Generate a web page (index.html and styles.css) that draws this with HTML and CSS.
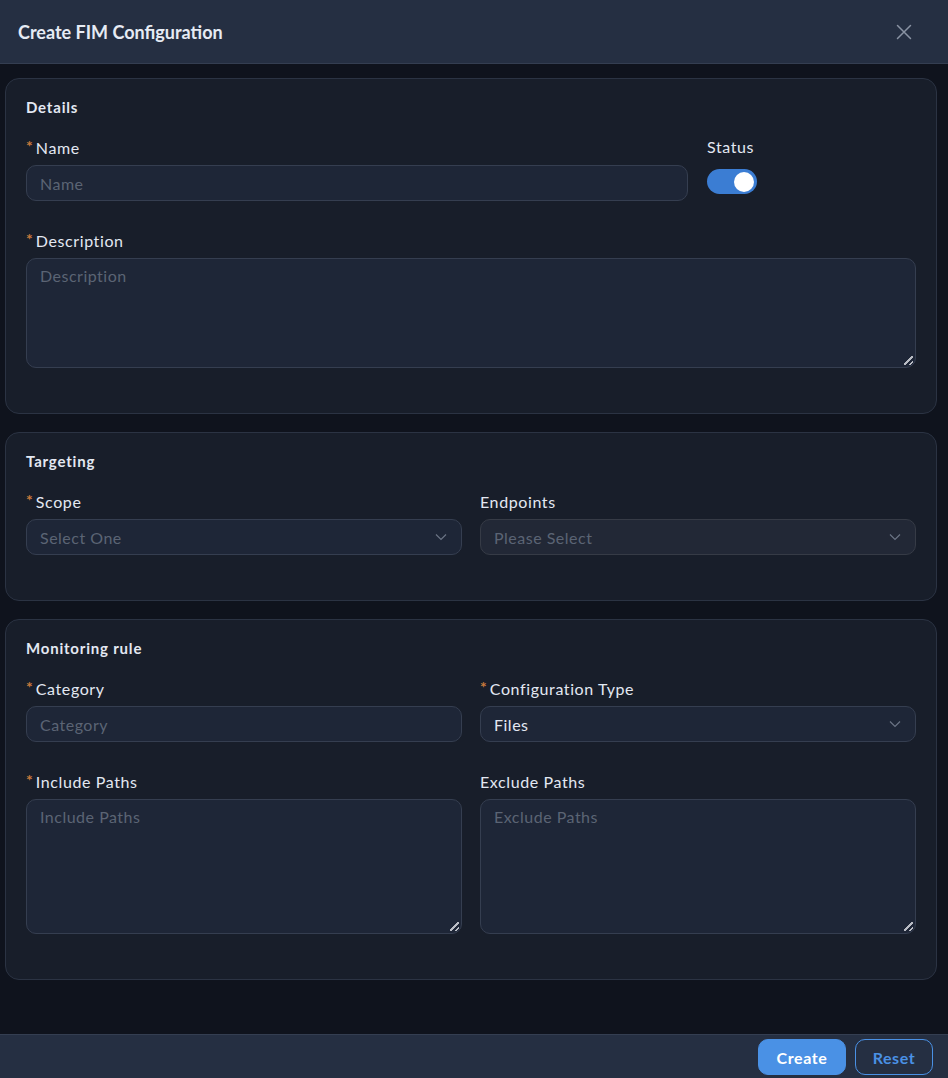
FILE: index.html
```html
<!DOCTYPE html>
<html>
<head>
<meta charset="utf-8">
<link rel="stylesheet" href="styles.css">
</head>
<body>
<div class="modal">
  <header class="modal-header">
    <h1 class="modal-title">Create FIM Configuration</h1>
    <button class="close-btn" aria-label="Close">
      <svg width="16" height="16" viewBox="0 0 16 16"><path d="M1.5 1.5 L14.5 14.5 M14.5 1.5 L1.5 14.5" stroke="#8a93a3" stroke-width="1.5" fill="none" stroke-linecap="round"/></svg>
    </button>
  </header>

  <main class="modal-body">
    <section class="card">
      <h2 class="card-title">Details</h2>
      <div class="row-name">
        <div class="field field-grow">
          <label class="label"><span class="req">*</span>Name</label>
          <div class="input"><span class="ph">Name</span></div>
        </div>
        <div class="field field-status">
          <label class="label">Status</label>
          <div class="toggle"><span class="knob"></span></div>
        </div>
      </div>
      <div class="field">
        <label class="label"><span class="req">*</span>Description</label>
        <div class="textarea ta-desc"><span class="ph">Description</span><span class="grip"></span></div>
      </div>
    </section>

    <section class="card">
      <h2 class="card-title">Targeting</h2>
      <div class="grid2">
        <div class="field">
          <label class="label"><span class="req">*</span>Scope</label>
          <div class="input select"><span class="ph">Select One</span>
            <svg class="chev" width="12" height="8" viewBox="0 0 12 8"><path d="M1 1.5 L6 6.5 L11 1.5" stroke="#6b7485" stroke-width="1.2" fill="none"/></svg>
          </div>
        </div>
        <div class="field">
          <label class="label">Endpoints</label>
          <div class="input select disabled"><span class="ph">Please Select</span>
            <svg class="chev" width="12" height="8" viewBox="0 0 12 8"><path d="M1 1.5 L6 6.5 L11 1.5" stroke="#6b7485" stroke-width="1.2" fill="none"/></svg>
          </div>
        </div>
      </div>
    </section>

    <section class="card">
      <h2 class="card-title">Monitoring rule</h2>
      <div class="grid2">
        <div class="field">
          <label class="label"><span class="req">*</span>Category</label>
          <div class="input"><span class="ph">Category</span></div>
        </div>
        <div class="field">
          <label class="label"><span class="req">*</span>Configuration Type</label>
          <div class="input select"><span class="val">Files</span>
            <svg class="chev" width="12" height="8" viewBox="0 0 12 8"><path d="M1 1.5 L6 6.5 L11 1.5" stroke="#6b7485" stroke-width="1.2" fill="none"/></svg>
          </div>
        </div>
        <div class="field">
          <label class="label"><span class="req">*</span>Include Paths</label>
          <div class="textarea ta-paths"><span class="ph">Include Paths</span><span class="grip"></span></div>
        </div>
        <div class="field">
          <label class="label">Exclude Paths</label>
          <div class="textarea ta-paths"><span class="ph">Exclude Paths</span><span class="grip"></span></div>
        </div>
      </div>
    </section>
  </main>

  <footer class="modal-footer">
    <button class="btn btn-primary">Create</button>
    <button class="btn btn-outline">Reset</button>
  </footer>
</div>
</body>
</html>
```

FILE: styles.css
```css
* { box-sizing: border-box; }
html, body { margin: 0; padding: 0; }
body {
  background: #0f131d;
  font-family: Lato, "Noto Sans", sans-serif;
  color: #e3e8f2;
  width: 948px;
  height: 1078px;
  overflow: hidden;
}
.modal {
  display: flex;
  flex-direction: column;
  height: 1078px;
}
.modal-header {
  height: 64px;
  flex: none;
  background: #252f42;
  border-bottom: 1px solid #343e51;
  display: flex;
  align-items: center;
  justify-content: space-between;
  padding: 0 36px 0 18px;
}
.modal-title {
  margin: 0;
  font-size: 18px;
  font-weight: 700;
  color: #e6ebf4;
  letter-spacing: 0;
}
.close-btn {
  background: none;
  border: 0;
  padding: 0;
  display: flex;
  cursor: pointer;
}
.modal-body {
  flex: 1;
  padding: 14px 11px 0 5px;
  display: flex;
  flex-direction: column;
  gap: 18px;
}
.card {
  background: #181e2a;
  border: 1px solid #2b3343;
  border-radius: 14px;
  padding: 19px 20px 45px 20px;
}
.card-title {
  margin: 0 0 21px 0;
  font-size: 15px;
  font-weight: 700;
  color: #e3e8f2;
  line-height: 18px;
  letter-spacing: 0.8px;
}
.row-name {
  display: flex;
  gap: 19px;
}
.field-grow { flex: 1; }
.field-status { width: 209px; }
.field { margin-bottom: 29px; }
.card > .field:last-child { margin-bottom: 0; }
.grid2 {
  display: grid;
  grid-template-columns: 1fr 1fr;
  column-gap: 18px;
  row-gap: 29px;
}
.grid2 .field { margin-bottom: 0; }
.label {
  display: block;
  font-size: 16px;
  line-height: 21px;
  height: 21px;
  color: #e3e8f2;
  margin-bottom: 7px;
  white-space: nowrap;
  letter-spacing: 0.6px;
}
.field-status .label { margin-bottom: 12px; margin-top: -1px; }
.req {
  color: #c97a3c;
  font-size: 16px;
  font-weight: 700;
  line-height: 1;
  margin-right: 3px;
  position: relative;
  top: -2px;
  letter-spacing: 0;
}
.input {
  height: 36px;
  background: #1e2637;
  border: 1px solid #353e50;
  border-radius: 10px;
  padding: 0 13px;
  display: flex;
  align-items: center;
  font-size: 16px;
  letter-spacing: 0.5px;
}
.ph { color: #5b6474; }
.val { color: #e3e8f2; }
.select { justify-content: space-between; }
.select .chev { margin-right: 1px; }
.disabled { background: #222836; border-color: #363b46; }
.textarea {
  position: relative;
  background: #1e2637;
  border: 1px solid #353e50;
  border-radius: 10px;
  padding: 8px 13px;
  font-size: 16px;
  line-height: 18px;
  letter-spacing: 0.5px;
}
.ta-desc { height: 110px; }
.ta-paths { height: 135px; }
.grip {
  position: absolute;
  right: 2px;
  bottom: 2px;
  width: 9px;
  height: 9px;
  background:
    linear-gradient(135deg, transparent 0 44%, #b9bcc4 44% 56%, transparent 56%),
    linear-gradient(135deg, transparent 0 74%, #b9bcc4 74% 86%, transparent 86%);
}
.toggle {
  width: 50px;
  height: 25px;
  border-radius: 13px;
  background: #3b7dd3;
  position: relative;
}
.knob {
  position: absolute;
  right: 3px;
  top: 2.5px;
  width: 20px;
  height: 20px;
  border-radius: 50%;
  background: #ffffff;
}
.modal-footer {
  height: 44px;
  flex: none;
  background: #252f42;
  border-top: 1px solid #343e51;
  display: flex;
  justify-content: flex-end;
  align-items: center;
  gap: 9px;
  padding: 1px 15px 0 0;
}
.btn {
  height: 36px;
  border-radius: 10px;
  font-family: inherit;
  font-size: 16px;
  font-weight: 700;
  letter-spacing: 0.6px;
  cursor: pointer;
}
.btn-primary {
  width: 88px;
  background: #4a91e5;
  color: #ffffff;
  border: 1px solid #4a91e5;
}
.btn-outline {
  width: 78px;
  background: transparent;
  color: #4a91e5;
  border: 1px solid #4a91e5;
}
```
